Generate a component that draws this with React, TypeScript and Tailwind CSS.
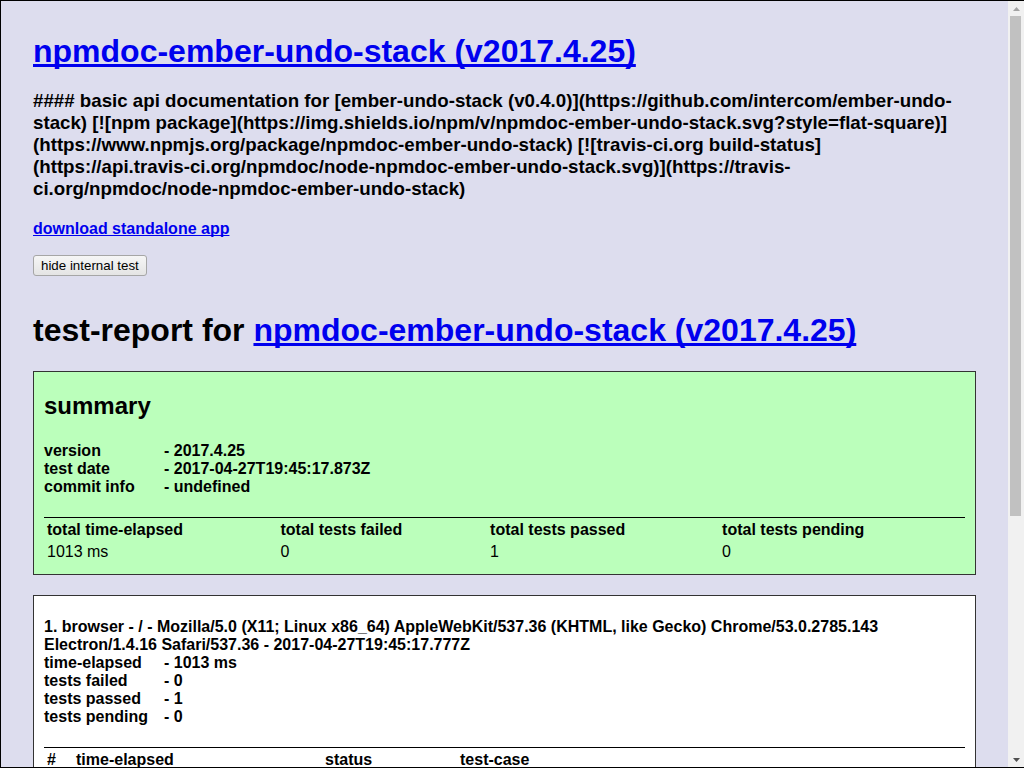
import React from 'react';

const summaryRows = [
    { label: 'version', value: '- 2017.4.25' },
    { label: 'test date', value: '- 2017-04-27T19:45:17.873Z' },
    { label: 'commit info', value: '- undefined' },
];

const platformRows = [
    { label: 'time-elapsed', value: '- 1013 ms' },
    { label: 'tests failed', value: '- 0' },
    { label: 'tests passed', value: '- 1' },
    { label: 'tests pending', value: '- 0' },
];

const totals = [
    { label: 'total time-elapsed', value: '1013 ms' },
    { label: 'total tests failed', value: '0' },
    { label: 'total tests passed', value: '1' },
    { label: 'total tests pending', value: '0' },
];

const descLines = [
    '#### basic api documentation for [ember-undo-stack (v0.4.0)](https://github.com/intercom/ember-undo-',
    'stack) [![npm package](https://img.shields.io/npm/v/npmdoc-ember-undo-stack.svg?style=flat-square)]',
    '(https://www.npmjs.org/package/npmdoc-ember-undo-stack) [![travis-ci.org build-status]',
    '(https://api.travis-ci.org/npmdoc/node-npmdoc-ember-undo-stack.svg)](https://travis-',
    'ci.org/npmdoc/node-npmdoc-ember-undo-stack)',
];

const linkClass = 'text-[#00e] underline [text-decoration-skip-ink:none]';
const cellClass = 'p-[1px] text-left align-middle';

function Platform({ children, passed }: { children: React.ReactNode; passed?: boolean }) {
    return (
        <div className={`border border-[#333] px-[10px] pb-[10px] mb-[20px] ${passed ? 'bg-[#bfb]' : 'bg-white'}`}>
            {children}
        </div>
    );
}

// static classic scrollbar, scrolled to the top
function Scrollbar() {
    return (
        <div className="w-[16px] shrink-0 flex flex-col bg-[#f1f1f1]">
            <div className="h-[15px] flex items-center justify-center">
                <svg width="7" height="4" viewBox="0 0 7 4">
                    <path d="M0 4 L3.5 0 L7 4 Z" fill="#a3a3a3" />
                </svg>
            </div>
            <div className="ml-[2px] mr-[3px] h-[500px] bg-[#c1c1c1]" />
            <div className="flex-1" />
            <div className="h-[15px] flex items-center justify-center">
                <svg width="7" height="4" viewBox="0 0 7 4">
                    <path d="M0 0 L7 0 L3.5 4 Z" fill="#505050" />
                </svg>
            </div>
        </div>
    );
}

export default function App() {
    return (
        <div className="h-[768px] flex border-t border-l border-b border-black text-black font-['Liberation_Sans',Arial,sans-serif] text-[16px] leading-[normal]">
            <div className="flex-1 min-w-0 overflow-hidden bg-[#dde]">
                <div className="mx-8 flow-root">
                    <h1 className="mt-[32px] text-[32px] font-bold leading-[normal]">
                        <a href="#" className={linkClass}>npmdoc-ember-undo-stack (v2017.4.25)</a>
                    </h1>
                    <h3 className="mt-[20px] text-[18.72px] font-bold leading-[normal]">
                        {descLines.map((line, i) => (
                            <React.Fragment key={i}>
                                {line}
                                {i < descLines.length - 1 && <br />}
                            </React.Fragment>
                        ))}
                    </h3>
                    <h4 className="mt-[20px] text-[16px] font-bold leading-[normal]">
                        <a href="#" className={linkClass}>download standalone app</a>
                    </h4>
                    <button className="mt-[17px] block h-[21px] px-[7px] border border-[#a6a6a6] rounded-[3px] bg-[linear-gradient(#f6f6f6,#e4e4e4)] text-[13.333px] leading-[normal] text-black">
                        hide internal test
                    </button>
                    <h1 className="mt-[36px] mb-[22px] text-[32px] font-bold leading-[normal]">
                        test-report for <a href="#" className={linkClass}>npmdoc-ember-undo-stack (v2017.4.25)</a>
                    </h1>

                    <Platform passed>
                        <h2 className="mt-[20px] text-[24px] font-bold leading-[normal]">summary</h2>
                        <h4 className="mt-[22px] mb-[21.28px] font-bold">
                            {summaryRows.map(r => (
                                <div key={r.label}>
                                    <span className="inline-block w-[120px]">{r.label}</span>
                                    {r.value}
                                </div>
                            ))}
                        </h4>
                        <table className="w-full border-separate border-spacing-[2px] border-t border-black">
                            <thead>
                                <tr>
                                    {totals.map(t => (
                                        <th key={t.label} className={`${cellClass} font-bold`}>{t.label}</th>
                                    ))}
                                </tr>
                            </thead>
                            <tbody>
                                <tr>
                                    {totals.map(t => (
                                        <td key={t.label} className={cellClass}>{t.value}</td>
                                    ))}
                                </tr>
                            </tbody>
                        </table>
                    </Platform>

                    <Platform>
                        <h4 className="mt-[22px] mb-[21px] font-bold">
                            <div>
                                1. browser - / - Mozilla/5.0 (X11; Linux x86_64) AppleWebKit/537.36 (KHTML, like Gecko) Chrome/53.0.2785.143 Electron/1.4.16 Safari/537.36 - 2017-04-27T19:45:17.777Z
                            </div>
                            {platformRows.map(r => (
                                <div key={r.label}>
                                    <span className="inline-block w-[120px]">{r.label}</span>
                                    {r.value}
                                </div>
                            ))}
                        </h4>
                        <table className="w-full border-separate border-spacing-[2px] border-t border-black">
                            <thead>
                                <tr>
                                    <th className={`${cellClass} w-[27px] font-bold`}>#</th>
                                    <th className={`${cellClass} w-[247px] font-bold`}>time-elapsed</th>
                                    <th className={`${cellClass} w-[133px] font-bold`}>status</th>
                                    <th className={`${cellClass} font-bold`}>test-case</th>
                                </tr>
                            </thead>
                            <tbody>
                                <tr className="bg-[#bfb]">
                                    <td className={cellClass}>1</td>
                                    <td className={cellClass}>1013 ms</td>
                                    <td className={cellClass}>passed</td>
                                    <td className={cellClass}>testCase_webpage_default</td>
                                </tr>
                            </tbody>
                        </table>
                    </Platform>
                </div>
            </div>
            <Scrollbar />
        </div>
    );
}
